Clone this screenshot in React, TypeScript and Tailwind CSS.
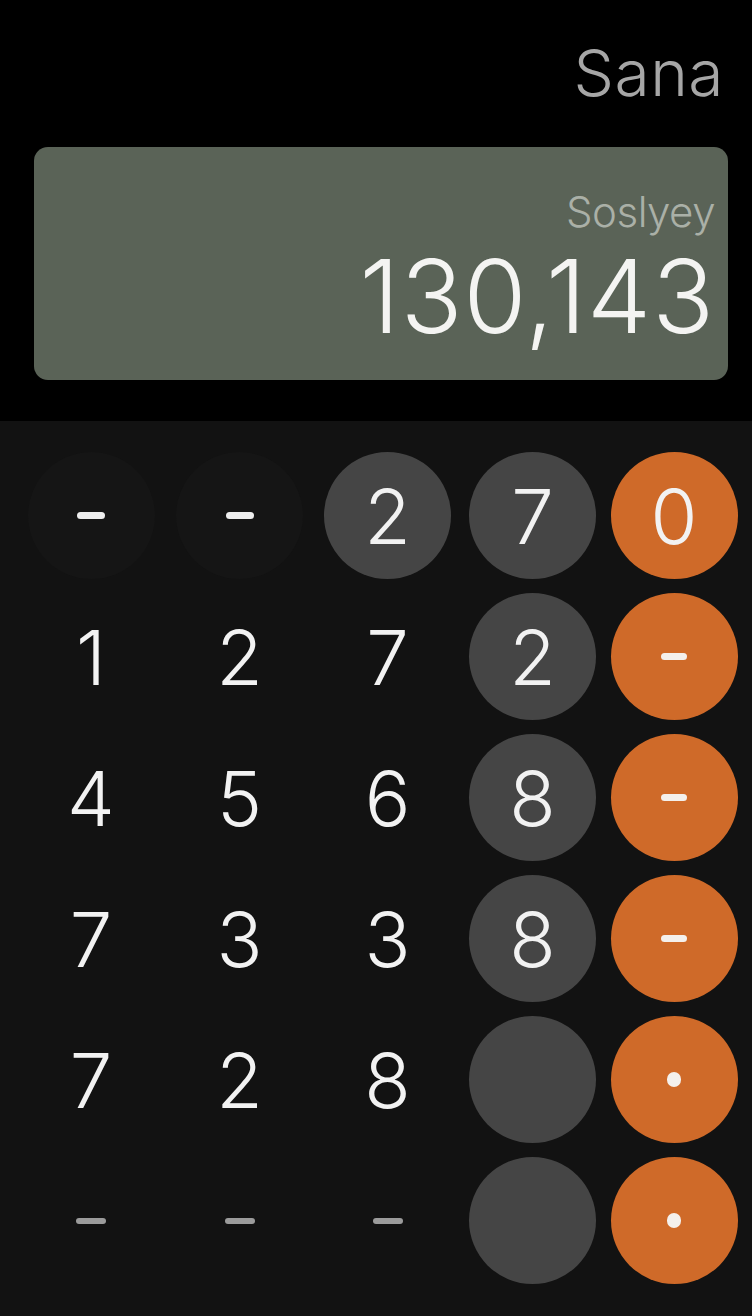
import React from 'react';

type Key =
  | { kind: 'digit'; label: string; bg?: 'none' | 'faint' | 'gray' | 'orange' }
  | { kind: 'dash'; bg?: 'none' | 'faint' | 'gray' | 'orange'; dim?: boolean }
  | { kind: 'dot'; bg: 'orange' }
  | { kind: 'blank'; bg: 'gray' };

const rows: Key[][] = [
  [
    { kind: 'dash', bg: 'faint' },
    { kind: 'dash', bg: 'faint' },
    { kind: 'digit', label: '2', bg: 'gray' },
    { kind: 'digit', label: '7', bg: 'gray' },
    { kind: 'digit', label: '0', bg: 'orange' },
  ],
  [
    { kind: 'digit', label: '1' },
    { kind: 'digit', label: '2' },
    { kind: 'digit', label: '7' },
    { kind: 'digit', label: '2', bg: 'gray' },
    { kind: 'dash', bg: 'orange' },
  ],
  [
    { kind: 'digit', label: '4' },
    { kind: 'digit', label: '5' },
    { kind: 'digit', label: '6' },
    { kind: 'digit', label: '8', bg: 'gray' },
    { kind: 'dash', bg: 'orange' },
  ],
  [
    { kind: 'digit', label: '7' },
    { kind: 'digit', label: '3' },
    { kind: 'digit', label: '3' },
    { kind: 'digit', label: '8', bg: 'gray' },
    { kind: 'dash', bg: 'orange' },
  ],
  [
    { kind: 'digit', label: '7' },
    { kind: 'digit', label: '2' },
    { kind: 'digit', label: '8' },
    { kind: 'blank', bg: 'gray' },
    { kind: 'dot', bg: 'orange' },
  ],
  [
    { kind: 'dash', dim: true },
    { kind: 'dash', dim: true },
    { kind: 'dash', dim: true },
    { kind: 'blank', bg: 'gray' },
    { kind: 'dot', bg: 'orange' },
  ],
];

const bgClass = (bg?: string) => {
  switch (bg) {
    case 'faint':
      return 'bg-[#151515]';
    case 'gray':
      return 'bg-[#454545]';
    case 'orange':
      return 'bg-[#cf6a29]';
    default:
      return 'bg-transparent';
  }
};

function KeyButton({ k }: { k: Key }) {
  return (
    <div className={`w-[127px] h-[127px] rounded-full flex items-center justify-center ${bgClass(k.bg)}`}>
      {k.kind === 'digit' && (
        <span className="text-[76px] leading-none font-light text-[#f2f2f2]">{k.label}</span>
      )}
      {k.kind === 'dash' && (
        <span
          className={`block rounded-full ${
            k.dim ? 'w-[30px] h-[6px] bg-[#9b9b9b]' : k.bg === 'orange' ? 'w-[26px] h-[7px] bg-[#f4f0ec]' : 'w-[28px] h-[7px] bg-[#eeeeee]'
          }`}
        />
      )}
      {k.kind === 'dot' && <span className="block w-[14px] h-[15px] rounded-full bg-[#f4f0ec]" />}
    </div>
  );
}

export default function App() {
  return (
    <div className="w-[752px] h-[1316px] bg-black flex flex-col overflow-hidden" style={{ fontFamily: 'Inter, "Liberation Sans", sans-serif' }}>
      <div className="h-[421px] flex flex-col">
        <div className="flex justify-end pr-[28px] pt-[41px] h-[147px]">
          <span className="text-[64px] leading-none font-light text-[#a6a6a6] tracking-[0.5px]">Sana</span>
        </div>
        <div className="ml-[34px] mr-[24px] h-[233px] rounded-[14px] bg-[#5a6357] flex flex-col items-end pr-[13px] pt-[44px]">
          <span className="text-[42px] leading-none font-light text-[#aab0a7] tracking-[-0.5px]">Soslyey</span>
          <span className="mt-[12px] text-[102px] leading-none font-light text-[#f4f4f2] tracking-[1px]">130,143</span>
        </div>
      </div>
      <div className="flex-1 bg-[#121212] pt-[24px] pl-[17px]">
        {rows.map((row, i) => (
          <div key={i} className="grid grid-cols-[148px_149px_147px_143px_140px] h-[141px] items-center">
            {row.map((k, j) => (
              <div key={j} className="flex justify-center">
                <KeyButton k={k} />
              </div>
            ))}
          </div>
        ))}
      </div>
    </div>
  );
}
